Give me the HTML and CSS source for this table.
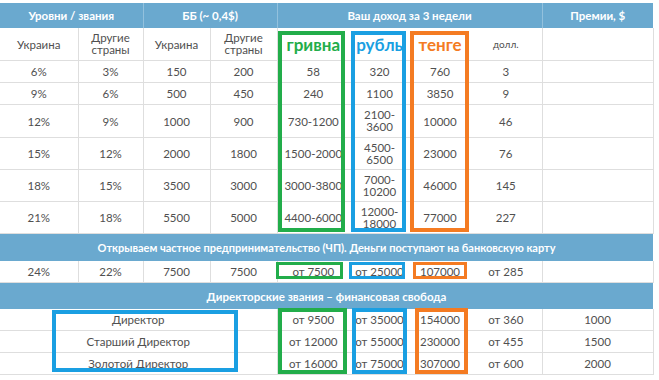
FILE: index.html
```html
<!DOCTYPE html>
<html lang="ru">
<head>
<meta charset="utf-8">
<title>Доход</title>
<link rel="stylesheet" href="styles.css">
</head>
<body>
<div class="wrap">
  <table class="t">
    <colgroup>
      <col class="w78"><col class="w65"><col class="w67"><col class="w67">
      <col class="w72"><col class="w61"><col class="w60"><col class="w72"><col class="w111">
    </colgroup>
    <tr class="hd">
      <th colspan="2" class="sep">Уровни / звания</th>
      <th colspan="2" class="sep">ББ (~ 0,4$)</th>
      <th colspan="4" class="sep">Ваш доход за 3 недели</th>
      <th>Премии, $</th>
    </tr>
    <tr class="sub">
      <td class="v">Украина</td>
      <td class="v two">Другие<br>страны</td>
      <td class="v">Украина</td>
      <td class="v two">Другие<br>страны</td>
      <td class="cur g">гривна</td>
      <td class="cur b">рубль</td>
      <td class="cur o">тенге</td>
      <td class="v small">долл.</td>
      <td class="v"></td>
    </tr>
    <tr class="r1">
      <td class="v">6%</td><td class="v">3%</td><td class="v">150</td><td class="v">200</td>
      <td>58</td><td>320</td><td>760</td><td class="v">3</td><td class="v"></td>
    </tr>
    <tr class="r1">
      <td class="v">9%</td><td class="v">6%</td><td class="v">500</td><td class="v">450</td>
      <td>240</td><td>1100</td><td>3850</td><td class="v">9</td><td class="v"></td>
    </tr>
    <tr class="r2 first">
      <td class="v">12%</td><td class="v">9%</td><td class="v">1000</td><td class="v">900</td>
      <td>730-1200</td><td class="two">2100-<br>3600</td><td>10000</td><td class="v">46</td><td class="v"></td>
    </tr>
    <tr class="r2">
      <td class="v">15%</td><td class="v">12%</td><td class="v">2000</td><td class="v">1800</td>
      <td>1500-2000</td><td class="two">4500-<br>6500</td><td>23000</td><td class="v">76</td><td class="v"></td>
    </tr>
    <tr class="r2">
      <td class="v">18%</td><td class="v">15%</td><td class="v">3500</td><td class="v">3000</td>
      <td>3000-3800</td><td class="two">7000-<br>10200</td><td>46000</td><td class="v">145</td><td class="v"></td>
    </tr>
    <tr class="r2">
      <td class="v">21%</td><td class="v">18%</td><td class="v">5500</td><td class="v">5000</td>
      <td>4400-6000</td><td class="two">12000-<br>18000</td><td>77000</td><td class="v">227</td><td class="v"></td>
    </tr>
    <tr class="band tall">
      <td colspan="9">Открываем частное предпринимательство (ЧП). Деньги поступают на банковскую карту</td>
    </tr>
    <tr class="r3">
      <td class="v">24%</td><td class="v">22%</td><td class="v">7500</td><td class="v">7500</td>
      <td>от 7500</td><td>от 25000</td><td>107000</td><td class="v">от 285</td><td class="v"></td>
    </tr>
    <tr class="band">
      <td colspan="9">Директорские звания – финансовая свобода</td>
    </tr>
    <tr class="r3">
      <td colspan="4" class="v">Директор</td>
      <td>от 9500</td><td>от 35000</td><td>154000</td><td class="v">от 360</td><td class="v">1000</td>
    </tr>
    <tr class="r3">
      <td colspan="4" class="v">Старший Директор</td>
      <td>от 12000</td><td>от 55000</td><td>230000</td><td class="v">от 455</td><td class="v">1500</td>
    </tr>
    <tr class="r3">
      <td colspan="4" class="v">Золотой Директор</td>
      <td>от 16000</td><td>от 75000</td><td>307000</td><td class="v">от 600</td><td class="v">2000</td>
    </tr>
  </table>

  <div class="box green big-g"></div>
  <div class="box blue big-b"></div>
  <div class="box orange big-o"></div>

  <div class="box thin green chp-g"></div>
  <div class="box thin blue chp-b"></div>
  <div class="box thin orange chp-o"></div>

  <div class="box green dir-g"></div>
  <div class="box blue dir-b"></div>
  <div class="box orange dir-o"></div>
  <div class="box blue dir-names"></div>
</div>
</body>
</html>
```

FILE: styles.css
```css
html, body {
  margin: 0;
  padding: 0;
  background: #ffffff;
}

body {
  font-family: Lato, "Open Sans", sans-serif;
  color: #505050;
}

.wrap {
  position: relative;
  width: 653px;
  margin-top: 3px;
}

.t {
  width: 653px;
  table-layout: fixed;
  border-collapse: collapse;
  border-spacing: 0;
  font-size: 11.5px;
}

.w78 { width: 78px; }
.w65 { width: 65px; }
.w67 { width: 67px; }
.w72 { width: 72px; }
.w61 { width: 61px; }
.w60 { width: 60px; }
.w111 { width: 111px; }

.t th,
.t td {
  padding: 0;
  text-align: center;
  vertical-align: middle;
  white-space: nowrap;
  overflow: hidden;
}

.t td {
  border-bottom: 1px solid #dedede;
}

.t td.v {
  border-right: 1px solid #dedede;
}

.hd th {
  height: 25px;
  background: #6aa9cf;
  color: #ffffff;
  font-weight: 700;
  font-size: 11.5px;
}

.hd th.sep {
  border-right: 1px solid #93c1dd;
}

.sub td {
  height: 32px;
}

.two {
  line-height: 12px;
}

.cur {
  font-weight: 700;
  font-size: 17px;
}

.cur.g { color: #22ad4a; }
.cur.b { color: #1a9fe2; }
.cur.o { color: #f47b22; }

.small {
  font-size: 10px;
}

.r1 td { height: 21px; }
.r2 td { height: 31px; }
.r2.first td { height: 32px; }
.r3 td { height: 21px; }

.band td {
  height: 26px;
  background: #6aa9cf;
  color: #ffffff;
  font-weight: 700;
  font-size: 11.5px;
  border-bottom: none;
}

.band.tall td {
  height: 27px;
  font-size: 11px;
}

.box {
  position: absolute;
  box-sizing: border-box;
  border: 4px solid;
}

.box.thin {
  border-width: 3px;
}

.green { border-color: #22ad4a; }
.blue { border-color: #1a9fe2; }
.orange { border-color: #f47b22; }

.big-g { left: 278px; top: 28px; width: 67px; height: 201px; }
.big-b { left: 351px; top: 28px; width: 55px; height: 201px; }
.big-o { left: 410px; top: 28px; width: 59px; height: 201px; }

.chp-g { left: 276px; top: 259px; width: 67px; height: 17px; }
.chp-b { left: 349px; top: 259px; width: 56px; height: 17px; }
.chp-o { left: 413px; top: 259px; width: 54px; height: 17px; }

.dir-g { left: 278px; top: 305px; width: 69px; height: 66px; }
.dir-b { left: 352px; top: 305px; width: 55px; height: 66px; }
.dir-o { left: 415px; top: 305px; width: 53px; height: 66px; }
.dir-names { left: 52px; top: 307px; width: 186px; height: 62px; }
```
